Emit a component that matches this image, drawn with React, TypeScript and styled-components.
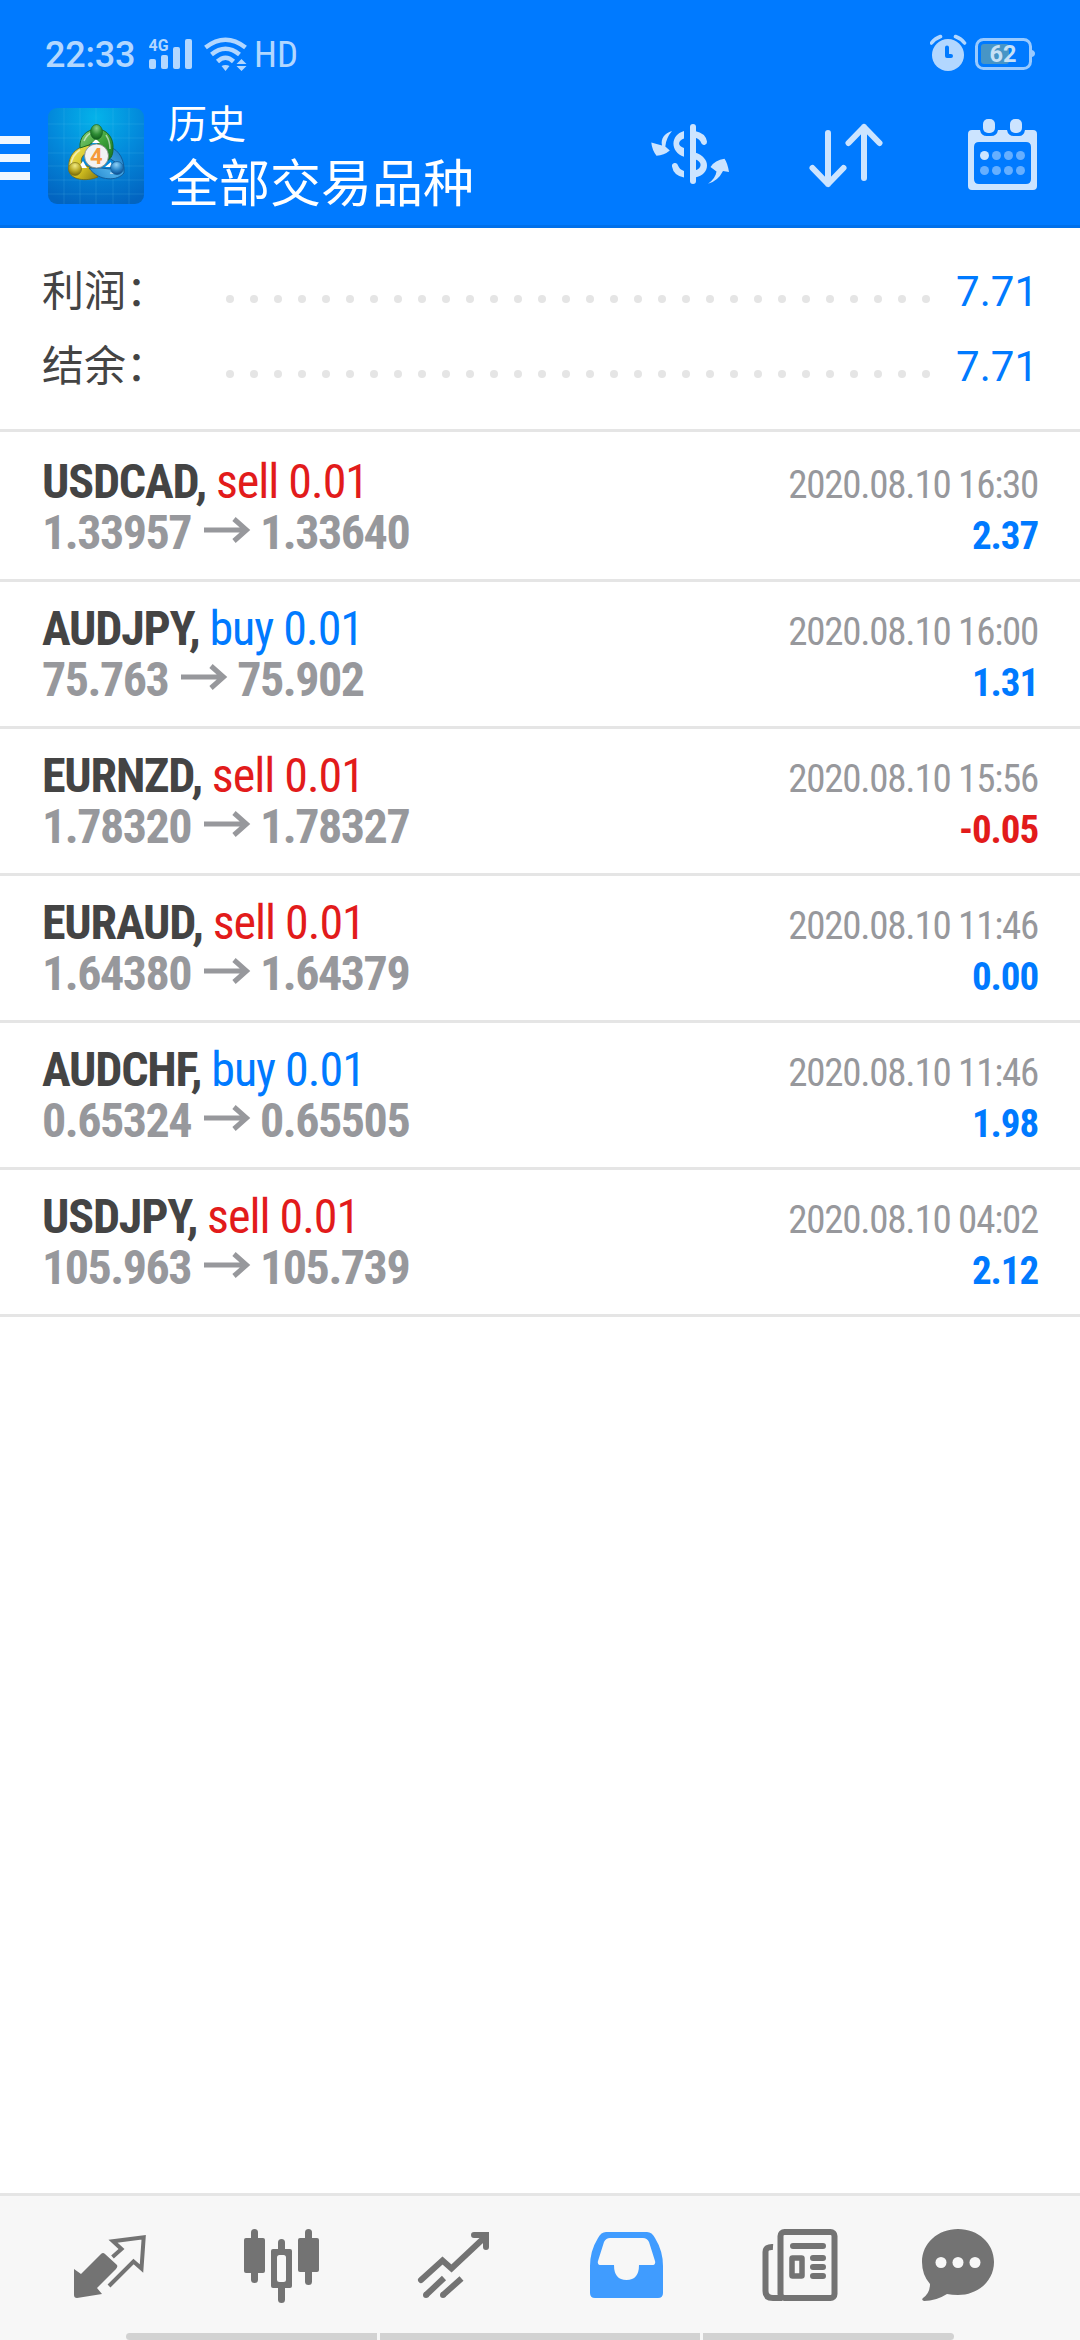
import React from 'react';
import styled, { createGlobalStyle, css } from 'styled-components';

const BLUE = '#007aff';
const RED = '#e21b1b';
const INK = '#444444';
const MUTED = '#97989c';
const TOOL = '#737373';

const GlobalStyle = createGlobalStyle`
  body { margin: 0; background: #fff; }
  * { box-sizing: border-box; }
  svg { display: block; flex: none; }
`;

const condensed = css`
  font-family: 'Roboto Condensed', Roboto, 'Noto Sans CJK SC', sans-serif;
  font-stretch: 75%;
`;

const Screen = styled.div`
  width: 1080px;
  height: 2340px;
  display: flex;
  flex-direction: column;
  overflow: hidden;
  background: #fff;
  font-family: Roboto, 'Noto Sans CJK SC', sans-serif;
`;

const Header = styled.header`
  flex: none;
  height: 228px;
  background: ${BLUE};
  border-bottom: 3px solid #0070ea;
`;

const StatusBar = styled.div`
  height: 108px;
  padding: 0 44px 0 45px;
  display: flex;
  justify-content: space-between;
  color: #b2d7ff;
`;

const StatusGroup = styled.div`
  display: flex;
  align-items: flex-start;
`;

const Clock = styled.span`
  width: 104px;
  padding-top: 34px;
  font-size: 36px;
  line-height: 43px;
  font-weight: 500;
  letter-spacing: -0.2px;
  white-space: nowrap;
`;

const NetworkTag = styled.span`
  ${condensed}
  width: 50px;
  padding-top: 33px;
  font-size: 37px;
  line-height: 43px;
  white-space: nowrap;
`;

const TitleBar = styled.div`
  height: 96px;
  display: flex;
  align-items: flex-start;
`;

const Menu = styled.div`
  width: 48px;
  padding-top: 28px;
  display: flex;
  flex-direction: column;
  gap: 10px;
`;

const MenuBar = styled.span`
  width: 30px;
  height: 8px;
  background: #f0f7ff;
`;

const Titles = styled.div`
  flex: 1;
  padding-left: 24px;
  margin-top: -14px;
  color: #fff;
  font-family: 'Noto Sans CJK SC', sans-serif;
  font-weight: 400;
`;

const Subtitle = styled.div`
  font-size: 39px;
  line-height: 54px;
`;

const Title = styled.div`
  font-size: 51px;
  line-height: 64px;
`;

const Actions = styled.div`
  display: flex;
  padding-right: 37px;
`;

const Summary = styled.section`
  flex: none;
  height: 204px;
  padding: 27px 42px 0;
  border-bottom: 3px solid #e5e5e5;
`;

const SummaryRow = styled.div`
  height: 75px;
  display: flex;
  align-items: center;
`;

const SummaryLabel = styled.span`
  width: 184px;
  padding-bottom: 10px;
  font-family: 'Noto Sans CJK SC', sans-serif;
  font-size: 42px;
  line-height: 60px;
  font-weight: 400;
  color: ${INK};
`;

const Dots = styled.div`
  flex: none;
  width: 704px;
  padding-top: 12px;
  display: flex;
  justify-content: space-between;
`;

const Dot = styled.i`
  width: 8px;
  height: 8px;
  border-radius: 4px;
  background: #e5e5e5;
`;

const SummaryValue = styled.span`
  flex: 1;
  padding-bottom: 2px;
  text-align: right;
  font-size: 42px;
  line-height: 60px;
  font-weight: 400;
  color: ${BLUE};
`;

const List = styled.main`
  flex: 1;
  padding-top: 3px;
`;

const Row = styled.div`
  height: 147px;
  padding: 21px 42px 0;
  border-bottom: 3px solid #e5e5e5;
  display: flex;
  justify-content: space-between;
  white-space: pre;
  ${condensed}
`;

const Side = styled.div<{ $end?: boolean }>`
  display: flex;
  flex-direction: column;
  align-items: ${(p) => (p.$end ? 'flex-end' : 'flex-start')};
`;

const Line = styled.div<{ $size: number }>`
  height: 51px;
  line-height: ${(p) => (p.$size > 40 ? 51 : 59)}px;
  font-size: ${(p) => p.$size}px;
  letter-spacing: -0.032em;
  display: flex;
`;

const Pair = styled.b`
  letter-spacing: -0.025em;
  color: ${INK};
`;

const Lots = styled.span<{ $side: string }>`
  letter-spacing: -0.021em;
  color: ${(p) => (p.$side === 'buy' ? BLUE : RED)};
`;

const Price = styled.b`
  letter-spacing: -0.031em;
  color: ${MUTED};
`;

const Stamp = styled.span`
  color: ${MUTED};
`;

const Profit = styled.b<{ $loss: boolean }>`
  letter-spacing: -0.028em;
  color: ${(p) => (p.$loss ? RED : BLUE)};
`;

const ArrowBox = styled.span`
  padding: 10px 9px 0 13px;
`;

const TabBar = styled.nav`
  flex: none;
  height: 147px;
  border-top: 3px solid #e5e5e5;
  background: #f7f7f7;
  display: flex;
  flex-direction: column;
  justify-content: space-between;
`;

const Tabs = styled.div`
  display: flex;
  justify-content: space-between;
  padding: 24px 63px 0 56px;
`;

const Gesture = styled.div`
  height: 7px;
  padding: 0 126px;
  display: grid;
  grid-template-columns: 251px 320px 251px;
  gap: 3px;
`;

const GestureBar = styled.span<{ $radius: string }>`
  background: #d2d2d2;
  border-radius: ${(p) => p.$radius};
`;

const SignalIcon = () => (
  <svg width="55" height="80" viewBox="149 0 55 80" fill="#b2d7ff">
    <text x="148.5" y="51" fontFamily="Roboto" fontWeight="700" fontSize="16" textLength="20" lengthAdjust="spacingAndGlyphs">4G</text>
    <rect x="149" y="59" width="7" height="10" rx="2" />
    <rect x="161" y="55" width="7" height="14" rx="2" />
    <rect x="173" y="47" width="7" height="22" rx="2" />
    <rect x="185" y="39" width="7" height="30" rx="2" />
  </svg>
);

const WifiIcon = () => (
  <svg width="50" height="80" viewBox="204 0 50 80" fill="none" stroke="#b2d7ff" strokeWidth="4.500">
    <path d="M205.5 47.5Q225.500 32 245.500 47.500M211.500 54.500Q225.500 43 239.500 54.500M217.500 61.500Q225.500 54 233.500 61.500" />
    <path d="M221.500 66Q225.500 64 229.500 66L225.500 71ZM236.500 64L241.500 59L246.500 64ZM236.500 66H246.500L241.500 71Z" fill="#b2d7ff" stroke="none" />
  </svg>
);

const AlarmIcon = () => (
  <svg width="45" height="80" viewBox="930 0 45 80" fill="none">
    <circle cx="948" cy="55" r="16" fill="#b2d7ff" />
    <path d="M931.500 43Q935 38.500 940.500 36.500M955.500 36.500Q961 38.500 964.500 43" stroke="#b2d7ff" strokeWidth="3.600" strokeLinecap="round" />
    <path d="M947 47.500V56H951" stroke={BLUE} strokeWidth="4" strokeLinecap="round" strokeLinejoin="round" />
  </svg>
);

const BatteryIcon = () => (
  <svg width="61" height="80" viewBox="975 0 61 80">
    <rect x="976.500" y="39.500" width="54" height="29" rx="7" fill="none" stroke="#99caff" strokeWidth="3" />
    <rect x="981" y="44" width="28" height="20" rx="3" fill="#4795c6" />
    <path d="M1032 50Q1035 51 1035 53.500T1032 57Z" fill="#99caff" />
    <text x="989.500" y="62" fontFamily="Roboto" fontWeight="700" fontSize="24" textLength="27" lengthAdjust="spacingAndGlyphs" fill="#c6e1f6">62</text>
  </svg>
);

const Logo = () => (
  <svg width="96" height="96" viewBox="0 0 96 96">
    <defs>
      <radialGradient id="bg" cx="0.5" cy="0.1" r="0.95">
        <stop offset="0" stopColor="#04b3ea" />
        <stop offset="0.5" stopColor="#0389db" />
        <stop offset="1" stopColor="#0264c0" />
      </radialGradient>
      <linearGradient id="green" x2="1" y2="1">
        <stop offset="0" stopColor="#8ed07e" />
        <stop offset="0.5" stopColor="#42a53c" />
        <stop offset="1" stopColor="#14701f" />
      </linearGradient>
      <linearGradient id="gold" x2="1" y2="1">
        <stop offset="0" stopColor="#f2ec62" />
        <stop offset="0.6" stopColor="#d0bd20" />
        <stop offset="1" stopColor="#87780f" />
      </linearGradient>
      <linearGradient id="sky" x1="1" x2="0" y2="1">
        <stop offset="0" stopColor="#1779c4" />
        <stop offset="0.6" stopColor="#49aae5" />
        <stop offset="1" stopColor="#1d83cb" />
      </linearGradient>
      <radialGradient id="gball" cx="0.5" cy="0.25" r="0.7"><stop offset="0" stopColor="#8bd08b" /><stop offset="0.6" stopColor="#2f8d35" /><stop offset="1" stopColor="#14631f" /></radialGradient>
      <radialGradient id="yball" cx="0.5" cy="0.25" r="0.7"><stop offset="0" stopColor="#f2ec86" /><stop offset="0.6" stopColor="#b8a723" /><stop offset="1" stopColor="#817410" /></radialGradient>
      <radialGradient id="bball" cx="0.45" cy="0.25" r="0.7"><stop offset="0" stopColor="#8fd2f8" /><stop offset="0.6" stopColor="#2b86c8" /><stop offset="1" stopColor="#0e579c" /></radialGradient>
    </defs>
    <rect width="96" height="96" rx="9" fill="url(#bg)" />
    <path d="M16 0V96M32 0V96M48 0V96M65 0V96M81 0V96M0 16H96M0 30H96M0 45H96M0 58H96M0 72H96M0 86H96" stroke="#6cd0f5" strokeOpacity="0.17" />
    <path d="M21 62C19 47 29 38 42 37L41 43C34 47 32 51 34 56L46 61L50 69C38 74 22 72 21 62Z" fill="url(#gold)" stroke="#736b18" strokeWidth="0.9" />
    <path d="M62 39C71 42 77 52 76 65C70 73 51 74 41 60L53 60L62 61L67 54L61 50Z" fill="url(#sky)" stroke="#115894" strokeWidth="0.900" />
    <path d="M32 40C31 29 38 22 48 21C60 21 66 31 65 41C65 48 62 52 58 53L54 43L48 32L41 37Z" fill="url(#green)" stroke="#17631e" strokeWidth="0.900" />
    <path d="M36 33Q39 26 45 24M23 57Q24 47 32 42M62 65Q69 66 73 61M58 27Q62 33 62 41" fill="none" stroke="#fff" strokeOpacity="0.550" strokeWidth="1.500" />
    <path d="M44 35L48 31L52 35ZM30 60L35 53L39 60ZM57 59L63 54L64 59Z" fill="#fff" />
    <ellipse cx="48.500" cy="24" rx="6" ry="7.500" fill="url(#gball)" stroke="#1a6b24" strokeWidth="0.700" />
    <circle cx="27" cy="61" r="6.500" fill="url(#yball)" stroke="#7d7118" strokeWidth="0.700" />
    <circle cx="69" cy="60" r="6.500" fill="url(#bball)" stroke="#115894" strokeWidth="0.700" />
    <circle cx="48.500" cy="48" r="12" fill="#f2f2f3" stroke="#7b837c" strokeWidth="0.800" />
    <text x="42" y="55.500" fontFamily="Roboto" fontWeight="700" fontSize="22" fill="#f59a3c">4</text>
  </svg>
);

const DollarIcon = () => (
  <svg width="158" height="96" viewBox="651 108 158 96" fill="#cce4ff">
    <rect x="690" y="124" width="6" height="60" rx="3" />
    <path d="M684 131C670 135 670 152 684 156.700V148C677.500 146 677.500 141 684 138.500Z" />
    <path d="M684 177.500Q673.500 175.500 672 166.500A3 3 0 0 1 678 165.500Q679.500 169.500 684 171Z" />
    <path d="M695 131Q705.500 133 707 141.500A3 3 0 0 1 701.500 143.500Q700 139 695 137.500Z" />
    <path d="M695 152.500C711 157 711 174.500 695 177.500V170.500C702.500 168.500 702.500 161.500 695 159.300Z" />
    <path d="M672 131C664.500 133 660.500 139 662 145.500L651.300 142.500Q652 150 656.500 155.700Q664 155.500 669.800 150.500L665.300 146.500Q666 138 672 131Z" />
    <path d="M708 183.800C713 180 716 176 716.500 171.500L710.500 167Q715 160 724.500 158.800Q727.500 163 729 172L723 171Q718 181 708 183.800Z" />
  </svg>
);

const SortIcon = () => (
  <svg width="159" height="96" viewBox="809 108 159 96" fill="none" stroke="#cce4ff" strokeWidth="6" strokeLinecap="round" strokeLinejoin="round">
    <path d="M828 133V184M812.500 168L828 184L843.500 168M864 178V127M848.500 143L864 127L879.500 143" />
  </svg>
);

const CalendarIcon = () => (
  <svg width="75" height="96" viewBox="968 108 75 96">
    <path fillRule="evenodd" fill="#cce4ff" d="M972 130H980Q981 136 987 136H991Q997 136 998 130H1007Q1008 136 1014 136H1019Q1024 136 1025 130H1033Q1037 130 1037 134V186Q1037 190 1033 190H972Q968 190 968 186V134Q968 130 972 130ZM979 142Q974 142 974 147V179Q974 184 979 184H1026Q1031 184 1031 179V147Q1031 142 1026 142Z" />
    <rect x="983" y="119" width="12" height="14" rx="5" fill="#cce4ff" />
    <rect x="1010" y="119" width="12" height="14" rx="5" fill="#cce4ff" />
    {[155.5, 170.5].map((y) => [984.5, 996.5, 1008.5, 1020.5].map((x) => (
      <circle key={`${x}-${y}`} cx={x} cy={y} r="4.500" fill={x === 984.5 && y === 155.5 ? '#cce4ff' : '#66afff'} />
    )))}
  </svg>
);

const PriceArrow = () => (
  <svg width="47" height="26" viewBox="0 0 47 26" fill="none" stroke={MUTED} strokeWidth="5">
    <path d="M0 13H43M30 2L42.500 13L30 24" />
  </svg>
);

const QuotesIcon = () => (
  <svg width="96" height="96" viewBox="56 2220 96 96">
    <path fill={TOOL} d="M74 2269L81 2274L101 2254Q103 2252 105 2254L117 2265Q118 2267 116 2269L97 2288L102 2294L77 2298Q74 2298 74 2295Z" />
    <path fill="none" stroke={TOOL} strokeWidth="4" strokeLinejoin="miter" d="M112.500 2257L121.500 2249L113 2241.200L143.700 2237.200L141.500 2268.500L133.500 2261.500L109 2286" />
  </svg>
);

const ChartIcon = () => (
  <svg width="96" height="96" viewBox="229 2220 96 96" fill={TOOL}>
    <rect x="251" y="2229" width="7" height="54" rx="3.500" />
    <rect x="244" y="2238" width="21" height="35" rx="2" />
    <rect x="305" y="2229" width="7" height="56" rx="3.500" />
    <rect x="298" y="2238" width="21" height="34" rx="2" />
    <rect x="278" y="2239" width="7" height="64" rx="3.500" />
    <rect x="271" y="2249" width="21" height="39" rx="2" />
    <rect x="277" y="2255" width="9" height="27" rx="2.500" fill="#f7f7f7" />
  </svg>
);

const TradeIcon = () => (
  <svg width="96" height="96" viewBox="402 2220 96 96" fill="none" stroke={TOOL} strokeWidth="6" strokeLinejoin="miter">
    <path strokeLinecap="round" d="M421 2280L442.500 2260.500L451.500 2268.500L485 2237M474 2235H486V2247" />
    <path d="M426 2295L444 2278M443 2295L461.500 2278.500" />
    <circle cx="426" cy="2295" r="3" fill={TOOL} stroke="none" />
    <circle cx="443" cy="2295" r="3" fill={TOOL} stroke="none" />
  </svg>
);

const HistoryIcon = () => (
  <svg width="96" height="96" viewBox="575 2220 96 96">
    <path fillRule="evenodd" fill="#409cff" d="M606 2232H647Q652 2232 655 2238Q663 2251 663 2266V2293Q663 2298 658 2298H595Q590 2298 590 2293V2266Q590 2251 598 2238Q601 2232 606 2232ZM610 2238Q606 2238 604 2242L598 2261Q597 2265 601 2265H614Q614 2280 626.500 2280T639 2265H652Q656 2265 655 2261L649 2242Q647 2238 643 2238Z" />
  </svg>
);

const NewsIcon = () => (
  <svg width="96" height="96" viewBox="748 2220 96 96" fill="none" stroke={TOOL} strokeWidth="6">
    <rect x="780.500" y="2232" width="54" height="66" rx="4" />
    <path d="M773 2247Q765.500 2246.500 765.500 2252V2291Q765.500 2298 773 2298H782" />
    <path strokeLinecap="round" d="M793 2246H823M813 2258H823M813 2267H823M813 2276H823" />
    <rect x="792" y="2258" width="10" height="18" rx="0.500" strokeWidth="5.500" />
  </svg>
);

const ChatIcon = () => (
  <svg width="96" height="96" viewBox="921 2220 96 96">
    <path fill={TOOL} d="M958 2229C978 2229 994 2243 994 2262S978 2295 958 2295Q952 2295 947 2294Q936 2301 924 2301Q921 2300 923 2298Q930 2293 930 2284Q922 2275 922 2262C922 2243 938 2229 958 2229Z" />
    {[941, 958, 975].map((x) => <circle key={x} cx={x} cy="2262.500" r="5.500" fill="#f7f7f7" />)}
  </svg>
);

const deals = [
  { pair: 'USDCAD', side: 'sell', open: '1.33957', close: '1.33640', time: '2020.08.10 16:30', profit: '2.37' },
  { pair: 'AUDJPY', side: 'buy', open: '75.763', close: '75.902', time: '2020.08.10 16:00', profit: '1.31' },
  { pair: 'EURNZD', side: 'sell', open: '1.78320', close: '1.78327', time: '2020.08.10 15:56', profit: '-0.05' },
  { pair: 'EURAUD', side: 'sell', open: '1.64380', close: '1.64379', time: '2020.08.10 11:46', profit: '0.00' },
  { pair: 'AUDCHF', side: 'buy', open: '0.65324', close: '0.65505', time: '2020.08.10 11:46', profit: '1.98' },
  { pair: 'USDJPY', side: 'sell', open: '105.963', close: '105.739', time: '2020.08.10 04:02', profit: '2.12' },
];

export default function App() {
  return (
    <Screen>
      <GlobalStyle />
      <Header>
        <StatusBar>
          <StatusGroup>
            <Clock>22:33</Clock>
            <SignalIcon />
            <WifiIcon />
            <NetworkTag>HD</NetworkTag>
          </StatusGroup>
          <StatusGroup>
            <AlarmIcon />
            <BatteryIcon />
          </StatusGroup>
        </StatusBar>
        <TitleBar>
          <Menu><MenuBar /><MenuBar /><MenuBar /></Menu>
          <Logo />
          <Titles>
            <Subtitle>历史</Subtitle>
            <Title>全部交易品种</Title>
          </Titles>
          <Actions><DollarIcon /><SortIcon /><CalendarIcon /></Actions>
        </TitleBar>
      </Header>
      <Summary>
        {['利润：', '结余：'].map((label) => (
          <SummaryRow key={label}>
            <SummaryLabel>{label}</SummaryLabel>
            <Dots>{Array.from({ length: 30 }, (_, i) => <Dot key={i} />)}</Dots>
            <SummaryValue>7.71</SummaryValue>
          </SummaryRow>
        ))}
      </Summary>
      <List>
        {deals.map((d) => (
          <Row key={d.pair}>
            <Side>
              <Line $size={48}><Pair>{d.pair}, </Pair><Lots $side={d.side}>{d.side} 0.01</Lots></Line>
              <Line $size={48}><Price>{d.open}</Price><ArrowBox><PriceArrow /></ArrowBox><Price>{d.close}</Price></Line>
            </Side>
            <Side $end>
              <Line $size={39}><Stamp>{d.time}</Stamp></Line>
              <Line $size={39}><Profit $loss={d.profit.startsWith('-')}>{d.profit}</Profit></Line>
            </Side>
          </Row>
        ))}
      </List>
      <TabBar>
        <Tabs>
          <QuotesIcon /><ChartIcon /><TradeIcon /><HistoryIcon /><NewsIcon /><ChatIcon />
        </Tabs>
        <Gesture>
          <GestureBar $radius="4px 0 0 4px" />
          <GestureBar $radius="0" />
          <GestureBar $radius="0 4px 4px 0" />
        </Gesture>
      </TabBar>
    </Screen>
  );
}
